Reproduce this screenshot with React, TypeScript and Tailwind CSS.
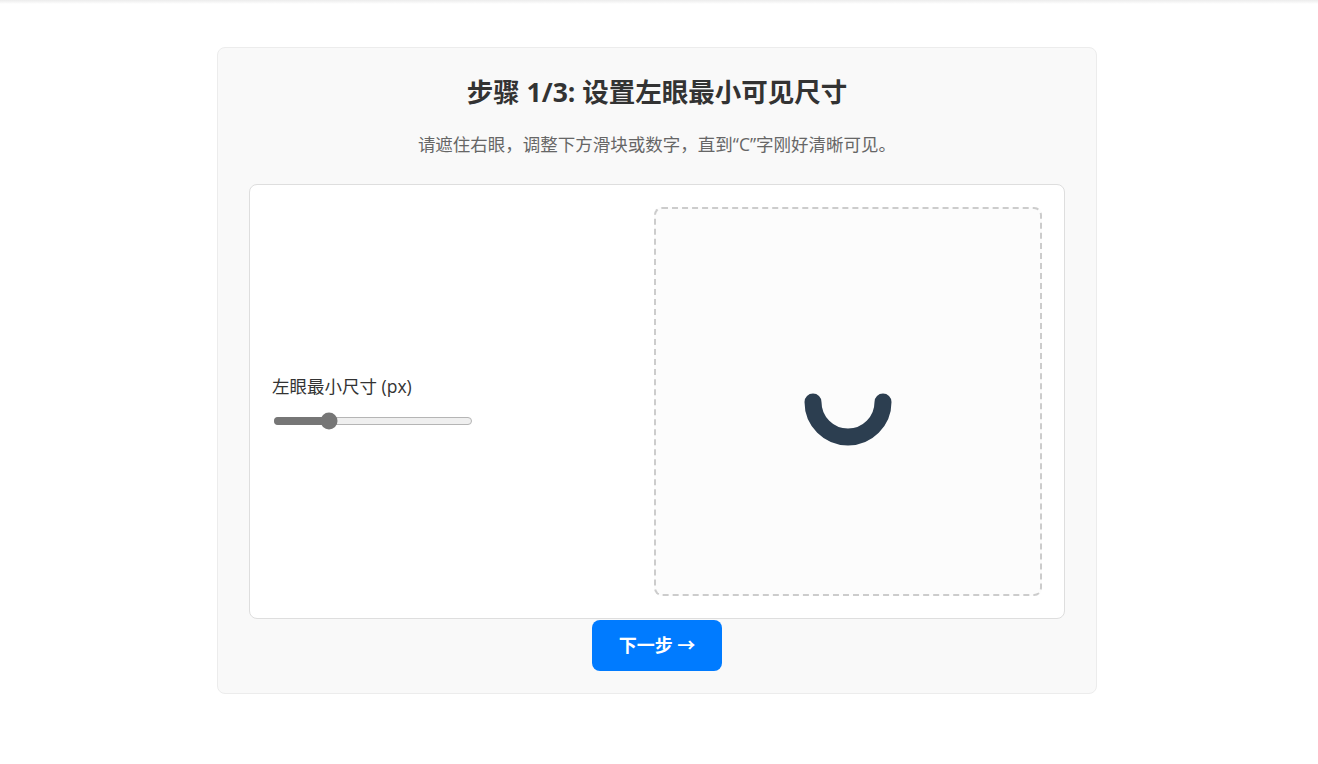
import { useState } from "react";

const font = { fontFamily: '"Open Sans", "Noto Sans CJK SC", sans-serif' };

function SizeSlider({ value, min, max }: { value: number; min: number; max: number }) {
  const pct = ((value - min) / (max - min)) * 100;
  return (
    <div className="relative mt-[16px] h-4 w-[202px]">
      <div className="absolute left-[2px] right-[2px] top-1/2 h-2 -translate-y-1/2 rounded-full border border-[#b5b5b5] bg-[#efefef]" />
      <div
        className="absolute left-[2px] top-1/2 h-2 -translate-y-1/2 rounded-full bg-[#767676]"
        style={{ width: `${pct}%` }}
      />
      <div
        className="absolute top-1/2 h-[17px] w-[17px] -translate-x-1/2 -translate-y-1/2 rounded-full bg-[#767676]"
        style={{ left: `${pct}%` }}
      />
    </div>
  );
}

function LandoltC() {
  return (
    <svg width="100" height="100" viewBox="0 0 100 100">
      <path
        d="M 15 50 A 35 35 0 0 0 85 50"
        fill="none"
        stroke="#2c3e50"
        strokeWidth="17"
        strokeLinecap="round"
      />
    </svg>
  );
}

export default function App() {
  const [size] = useState(12);

  return (
    <div className="min-h-screen bg-white text-[#333]" style={font}>
      <div className="h-[4px] bg-gradient-to-b from-[#ececec] to-white" />
      <div className="flex justify-center pr-[4px] pt-[43px]">
        <div className="w-[880px] rounded-lg border border-[#ececec] bg-[#f9f9f9] px-[31px] pb-[22px] pt-[25px]">
          <h1 className="text-center text-[26.5px] font-bold leading-[38px] text-[#333]">
            步骤 1/3: 设置左眼最小可见尺寸
          </h1>
          <p className="mt-[20px] text-center text-[17.5px] leading-[26px] text-[#666]">
            请遮住右眼，调整下方滑块或数字，直到“C”字刚好清晰可见。
          </p>
          <div className="mt-[27px] flex items-center justify-between rounded-lg border border-[#dedede] bg-white p-[22px]">
            <div className="flex flex-col">
              <label className="text-[17.5px] leading-[22px] text-[#333]">左眼最小尺寸 (px)</label>
              <SizeSlider value={size} min={5} max={30} />
            </div>
            <div className="flex h-[389px] w-[388px] items-center justify-center rounded-lg border-2 border-dashed border-[#cccccc] bg-[#fcfcfc]">
              <LandoltC />
            </div>
          </div>
          <div className="mt-[1px] flex justify-center">
            <button
              type="button"
              className="h-[51px] w-[130px] rounded-lg bg-[#007bff] text-[18px] font-bold text-white"
            >
              下一步 →
            </button>
          </div>
        </div>
      </div>
    </div>
  );
}
